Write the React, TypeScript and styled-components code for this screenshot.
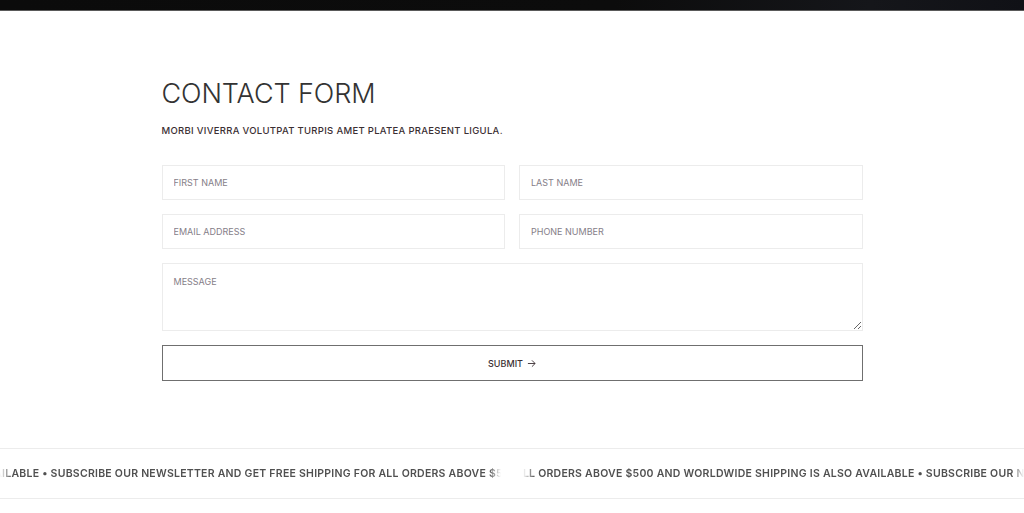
import React from "react";
import styled, { createGlobalStyle } from "styled-components";

const Global = createGlobalStyle`
  html, body { margin: 0; padding: 0; background: #fff; }
  body { font-family: Inter, "Liberation Sans", sans-serif; }
  * { box-sizing: border-box; }
`;

const Page = styled.div`
  width: 1024px;
  height: 513px;
  overflow: hidden;
  display: flex;
  flex-direction: column;
`;

const TopBar = styled.div`
  height: 11px;
  flex: none;
  background: linear-gradient(90deg, #0b0b0b 0%, #0c0c0c 60%, #15161a 85%, #101116 100%);
  border-bottom: 1px solid #5a5a5a;
`;

const Section = styled.section`
  width: 701px;
  margin: 0 auto;
  padding-top: 67px;
  display: flex;
  flex-direction: column;
`;

const Title = styled.h1`
  margin: 0;
  font-family: Inter, sans-serif;
  font-weight: 300;
  font-size: 27px;
  line-height: 32px;
  color: #333;
  letter-spacing: -0.1px;
`;

const Subtitle = styled.p`
  margin: 14px 0 0;
  font-size: 9.5px;
  line-height: 14px;
  letter-spacing: 0.3px;
  font-weight: 500;
  color: #3b2f33;
  text-transform: uppercase;
`;

const Form = styled.form`
  margin-top: 27px;
  display: grid;
  grid-template-columns: 1fr 1fr;
  column-gap: 14px;
  row-gap: 14px;
`;

const Input = styled.input`
  height: 35px;
  border: 1px solid #ececec;
  padding: 0 11px;
  font-family: Inter, sans-serif;
  font-size: 9px;
  outline: none;
  &::placeholder {
    color: #857e88;
    text-transform: uppercase;
  }
`;

const Message = styled.textarea`
  grid-column: 1 / span 2;
  height: 68px;
  border: 1px solid #ececec;
  padding: 12px 11px;
  font-family: Inter, sans-serif;
  font-size: 9px;
  outline: none;
  resize: vertical;
  &::placeholder {
    color: #857e88;
    text-transform: uppercase;
  }
`;

const Submit = styled.button`
  grid-column: 1 / span 2;
  height: 36px;
  background: #fff;
  border: 1px solid #6f6f6f;
  font-family: Inter, sans-serif;
  font-size: 9px;
  font-weight: 500;
  color: #3b2f33;
  display: flex;
  align-items: center;
  justify-content: center;
  gap: 4px;
  cursor: pointer;
`;

const Marquee = styled.div`
  margin-top: 67px;
  height: 51px;
  flex: none;
  border-top: 1px solid #ececec;
  border-bottom: 1px solid #ececec;
  display: flex;
  gap: 22px;
  align-items: center;
`;

const Segment = styled.div`
  flex: 1;
  display: flex;
  overflow: hidden;
  white-space: nowrap;
  line-height: 14px;
  -webkit-mask-image: linear-gradient(90deg, transparent 0, #000 12px, #000 calc(100% - 12px), transparent 100%);
  mask-image: linear-gradient(90deg, transparent 0, #000 12px, #000 calc(100% - 12px), transparent 100%);
`;

const Track = styled.span<{ $shift: number }>`
  flex: none;
  margin-left: ${(p) => -p.$shift}px;
  font-size: 10.5px;
  font-weight: 600;
  letter-spacing: 0.25px;
  color: #505050;
`;

const TEXT =
  "SUBSCRIBE OUR NEWSLETTER AND GET FREE SHIPPING FOR ALL ORDERS ABOVE $500 AND WORLDWIDE SHIPPING IS ALSO AVAILABLE \u2022 ";

export default function App() {
  return (
    <Page>
      <Global />
      <TopBar />
      <Section>
        <Title>CONTACT FORM</Title>
        <Subtitle>Morbi viverra volutpat turpis amet platea praesent ligula.</Subtitle>
        <Form onSubmit={(e) => e.preventDefault()}>
          <Input placeholder="First Name" />
          <Input placeholder="Last Name" />
          <Input placeholder="Email Address" />
          <Input placeholder="Phone Number" />
          <Message placeholder="Message" />
          <Submit type="submit">
            SUBMIT
            <svg width="9" height="9" viewBox="0 0 10 10" fill="none" stroke="#3b2f33" strokeWidth="1">
              <path d="M1 5h8M5.5 1.5L9 5l-3.5 3.5" />
            </svg>
          </Submit>
        </Form>
      </Section>
      <Marquee>
        <Segment>
          <Track $shift={20}>{"AVAILABLE \u2022 " + TEXT + TEXT}</Track>
        </Segment>
        <Segment>
          <Track $shift={8}>{"ALL ORDERS ABOVE $500 AND WORLDWIDE SHIPPING IS ALSO AVAILABLE \u2022 " + TEXT}</Track>
        </Segment>
      </Marquee>
    </Page>
  );
}
